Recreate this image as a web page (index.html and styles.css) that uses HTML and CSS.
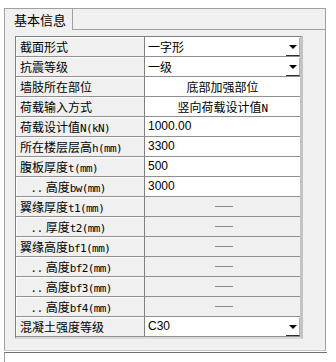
FILE: index.html
```html
<!DOCTYPE html>
<html lang="zh">
<head>
  <meta charset="UTF-8">
  <title>基本信息</title>
  <link rel="stylesheet" href="styles.css">
</head>
<body>
  <div class="frame">
    <div class="tabbar">
      <div class="tab">基本信息</div>
    </div>
    <div class="body">
      <div class="grid">
        <div class="label">截面形式</div>
        <div class="value edit select"><span class="txt">一字形</span><span class="drop"><i></i></span></div>

        <div class="label">抗震等级</div>
        <div class="value edit select"><span class="txt">一级</span><span class="drop"><i></i></span></div>

        <div class="label">墙肢所在部位</div>
        <div class="value edit center">底部加强部位</div>

        <div class="label">荷载输入方式</div>
        <div class="value edit center">竖向荷载设计值<span class="u">N</span></div>

        <div class="label">荷载设计值<span class="u">N(kN)</span></div>
        <div class="value edit num">1000.00</div>

        <div class="label">所在楼层层高<span class="u">h(mm)</span></div>
        <div class="value edit num">3300</div>

        <div class="label">腹板厚度<span class="u">t(mm)</span></div>
        <div class="value edit num">500</div>

        <div class="label sub"><span class="dots">..</span>高度<span class="u">bw(mm)</span></div>
        <div class="value edit num">3000</div>

        <div class="label">翼缘厚度<span class="u">t1(mm)</span></div>
        <div class="value off"><span class="dash"></span></div>

        <div class="label sub"><span class="dots">..</span>厚度<span class="u">t2(mm)</span></div>
        <div class="value off"><span class="dash"></span></div>

        <div class="label">翼缘高度<span class="u">bf1(mm)</span></div>
        <div class="value off"><span class="dash"></span></div>

        <div class="label sub"><span class="dots">..</span>高度<span class="u">bf2(mm)</span></div>
        <div class="value off"><span class="dash"></span></div>

        <div class="label sub"><span class="dots">..</span>高度<span class="u">bf3(mm)</span></div>
        <div class="value off"><span class="dash"></span></div>

        <div class="label sub"><span class="dots">..</span>高度<span class="u">bf4(mm)</span></div>
        <div class="value off"><span class="dash"></span></div>

        <div class="label">混凝土强度等级</div>
        <div class="value edit select"><span class="txt num">C30</span><span class="drop"><i></i></span></div>
      </div>
    </div>
  </div>
  <div class="footer"></div>
</body>
</html>
```

FILE: styles.css
```css
body {
  margin: 0;
  background: #fff;
  font-family: "Noto Sans CJK SC", "Liberation Sans", sans-serif;
  font-size: 12px;
  color: #000;
}
.frame {
  margin: 8px 0 0 4px;
  width: 322px;
  height: 343px;
  box-sizing: border-box;
  border: 1px solid #a0a0a0;
  border-bottom-color: #c8c8c8;
  background: #f0f0f0;
}
.tabbar {
  height: 20px;
  border-bottom: 1px solid #a0a0a0;
  display: flex;
}
.tab {
  width: 58px;
  height: 21px;
  padding-left: 9px;
  border-right: 1px solid #a0a0a0;
  background: #f0f0f0;
  font-size: 13px;
  line-height: 22px;
}
.body {
  padding: 6px 0 0 10px;
}
.grid {
  width: 284px;
  display: grid;
  grid-template-columns: 129px 155px;
  grid-auto-rows: 20px;
  border-top: 1px solid #808080;
  border-left: 1px solid #808080;
  border-right: 3px solid #c4c4c4;
  border-bottom: 2px solid #dcdcdc;
}
.label {
  box-sizing: border-box;
  padding-left: 4px;
  line-height: 19px;
  background: #f0f0f0;
  border-right: 1px solid #808080;
  border-bottom: 1px solid #909090;
  box-shadow: inset 1px 1px 0 #fff;
  white-space: nowrap;
}
.label.sub {
  padding-left: 16px;
}
.dots {
  letter-spacing: 3px;
  margin-right: 1px;
}
.u {
  font-family: "DejaVu Sans Mono", monospace;
  font-size: 11px;
  letter-spacing: -0.6px;
}
.value {
  box-sizing: border-box;
  padding-left: 3px;
  line-height: 19px;
  border-bottom: 1px solid #909090;
  white-space: nowrap;
}
.edit {
  background: #fff;
}
.off {
  background: #f0f0f0;
  display: flex;
  align-items: center;
  justify-content: center;
}
.center {
  text-align: center;
  padding-left: 0;
}
.num {
  font-family: "Liberation Sans", sans-serif;
}
.dash {
  width: 18px;
  height: 1px;
  background: #8a8a8a;
}
.select {
  display: flex;
  justify-content: space-between;
}
.drop {
  width: 13px;
  height: 17px;
  margin-top: 1px;
  border-right: 1px solid #b0b0b0;
  border-bottom: 1px solid #303030;
  display: flex;
  align-items: center;
  justify-content: center;
}
.drop i {
  width: 0;
  height: 0;
  border-left: 4px solid transparent;
  border-right: 4px solid transparent;
  border-top: 4px solid #000;
}
.footer {
  margin: 1px 0 0 4px;
  width: 322px;
  height: 10px;
  border-top: 1px solid #707070;
  border-left: 1px solid #a0a0a0;
}
```
